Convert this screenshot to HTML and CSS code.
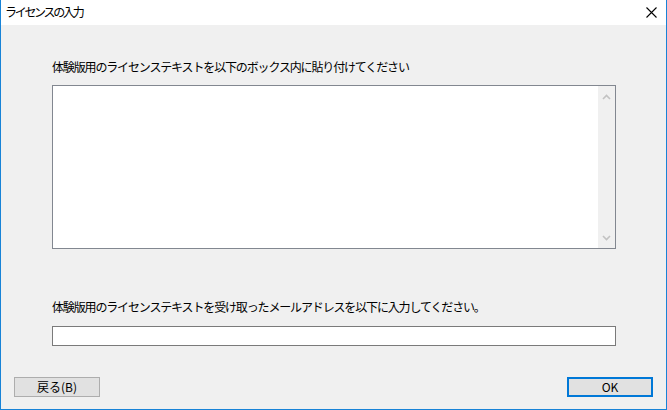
FILE: index.html
```html
<!DOCTYPE html>
<html lang="ja">
<head>
<meta charset="utf-8">
<link rel="stylesheet" href="styles.css">
</head>
<body>
<div class="window">
  <div class="titlebar">
    <span class="title">ライセンスの入力</span>
    <svg class="close" width="11" height="11" viewBox="0 0 11 11"><path d="M0.5 0.5 L10.5 10.5 M10.5 0.5 L0.5 10.5" stroke="#000" stroke-width="1.1" fill="none"/></svg>
  </div>
  <div class="client">
    <div class="form">
      <div class="label first">体験版用のライセンステキストを以下のボックス内に貼り付けてください</div>
      <div class="textbox">
        <div class="textarea-inner"></div>
        <div class="scrollbar">
          <svg width="9" height="6" viewBox="0 0 9 6"><path d="M1 5 L4.5 1.5 L8 5" stroke="#c2c2c2" stroke-width="1.6" fill="none"/></svg>
          <svg width="9" height="6" viewBox="0 0 9 6"><path d="M1 1 L4.5 4.5 L8 1" stroke="#c2c2c2" stroke-width="1.6" fill="none"/></svg>
        </div>
      </div>
      <div class="label second">体験版用のライセンステキストを受け取ったメールアドレスを以下に入力してください。</div>
      <div class="input"></div>
    </div>
    <div class="buttons">
      <button class="btn">戻る(B)</button>
      <button class="btn default">OK</button>
    </div>
  </div>
</div>
</body>
</html>
```
FILE: styles.css
```css
html, body {
  margin: 0;
  padding: 0;
  width: 667px;
  height: 410px;
  overflow: hidden;
}
body {
  font-family: "Noto Sans CJK JP", "Noto Sans", sans-serif;
  color: #000;
}
.window {
  box-sizing: border-box;
  width: 667px;
  height: 410px;
  border-left: 1px solid #1883d7;
  border-right: 1px solid #1883d7;
  border-bottom: 1px solid #1883d7;
  display: flex;
  flex-direction: column;
  background: #f0f0f0;
}
.titlebar {
  height: 25px;
  background: #fff;
  display: flex;
  align-items: center;
  justify-content: space-between;
  padding: 0 9px 0 4px;
  flex: none;
}
.title {
  font-size: 12px;
  letter-spacing: -2.3px;
  line-height: 16px;
  margin-top: -2px;
}
.close {
  display: block;
  margin-top: -1px;
}
.client {
  flex: 1;
  display: flex;
  flex-direction: column;
  justify-content: space-between;
}
.form {
  padding: 34px 0 0 51px;
  display: flex;
  flex-direction: column;
}
.label {
  font-size: 12px;
  letter-spacing: -1.15px;
  line-height: 16px;
}
.textbox {
  margin-top: 10px;
  width: 564px;
  height: 164px;
  box-sizing: border-box;
  border: 1px solid #828790;
  background: #fff;
  display: flex;
}
.textarea-inner {
  flex: 1;
}
.scrollbar {
  width: 17px;
  background: #f0f0f0;
  display: flex;
  flex-direction: column;
  justify-content: space-between;
  align-items: center;
  padding: 8px 0 7px;
}
.scrollbar svg {
  display: block;
}
.label.second {
  margin-top: 50px;
}
.input {
  margin-top: 11px;
  width: 564px;
  height: 20px;
  box-sizing: border-box;
  border: 1px solid #7a7a7a;
  background: #fff;
}
.buttons {
  display: flex;
  justify-content: space-between;
  padding: 0 13px 12px 13px;
}
.btn {
  box-sizing: border-box;
  width: 86px;
  height: 20px;
  border: 1px solid #adadad;
  background: #e1e1e1;
  font-family: "Noto Sans CJK JP", sans-serif;
  font-size: 12px;
  line-height: 16px;
  padding: 0;
  color: #000;
}
.btn.default {
  border: 2px solid #0078d7;
}
```
